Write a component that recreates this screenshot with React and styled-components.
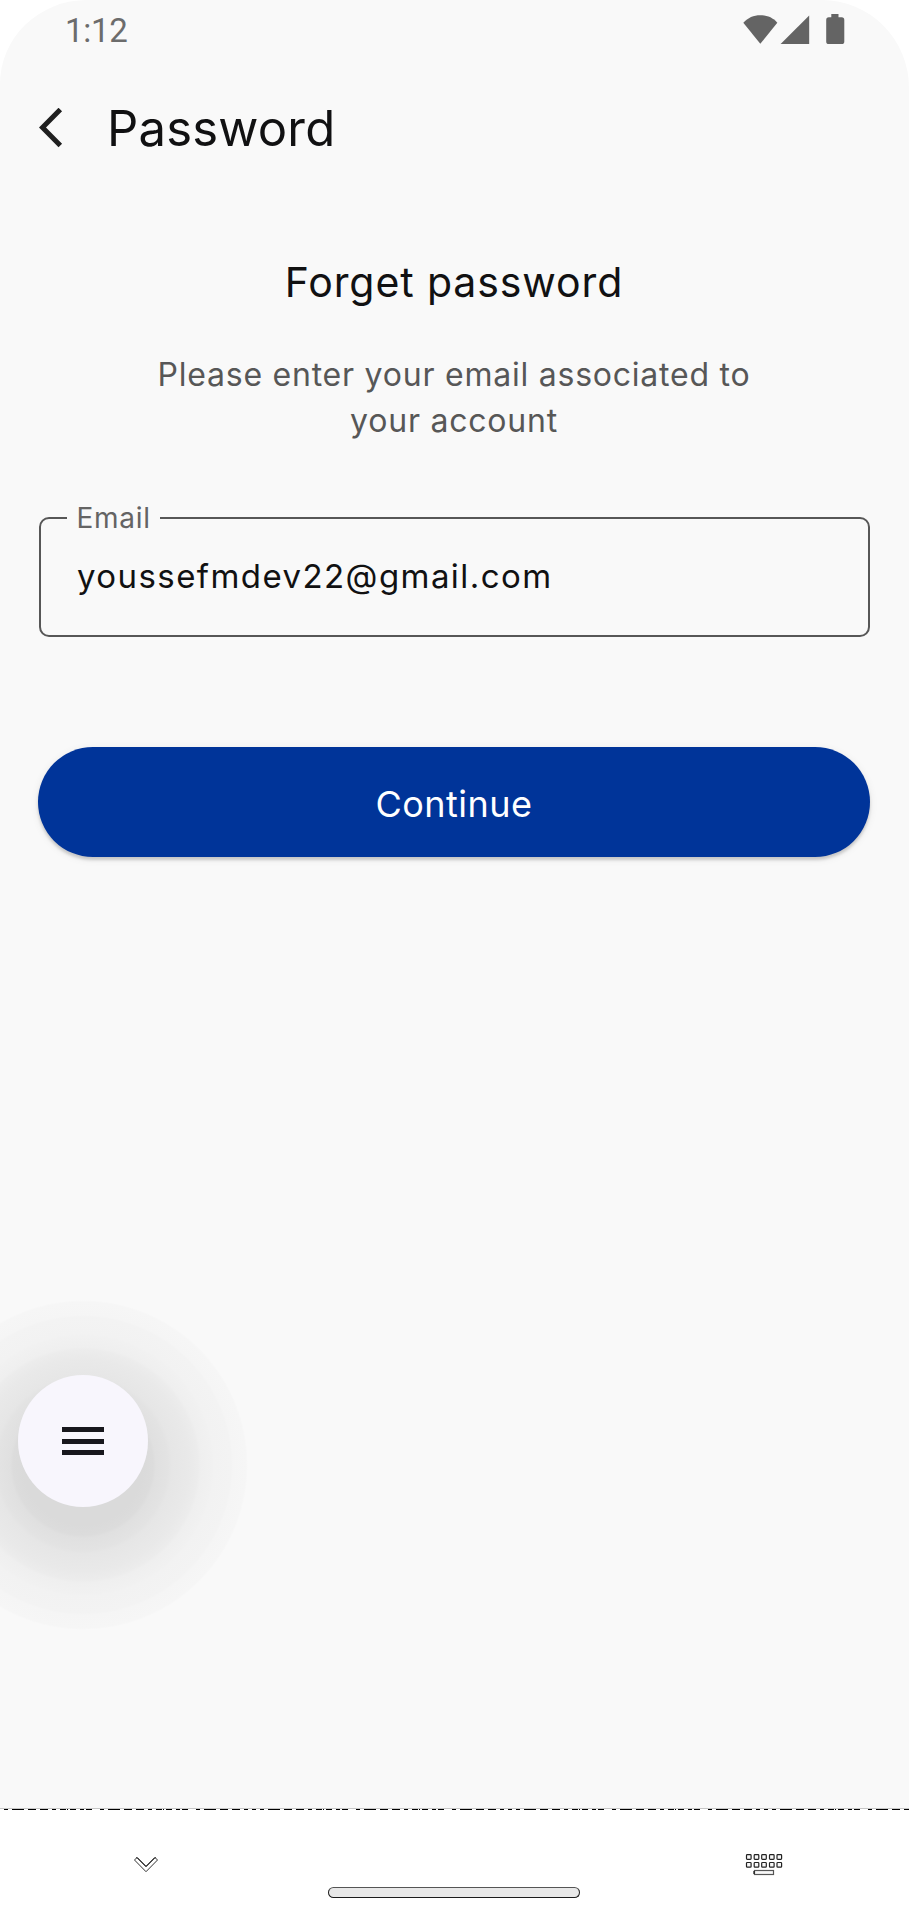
import React from "react";
import styled, { createGlobalStyle } from "styled-components";

const GlobalStyle = createGlobalStyle`
  *, *::before, *::after { box-sizing: border-box; }
  body { margin: 0; background: #fff; }
  button, input { font: inherit; }
`;

const Phone = styled.div`
  display: flex;
  flex-direction: column;
  width: 909px;
  height: 1920px;
  overflow: hidden;
  background: #fff;
  color: #111112;
  font-family: Inter, "Liberation Sans", sans-serif;
`;

const Screen = styled.main`
  position: relative;
  display: flex;
  flex-direction: column;
  height: 1808px;
  overflow: hidden;
  background: #f9f9f9;
  border-radius: 87px 87px 0 0 / 84px 88px 0 0;
`;

const StatusBar = styled.div`
  display: flex;
  align-items: center;
  justify-content: space-between;
  height: 61px;
  padding: 0 64px 0 65px;
`;

const Clock = styled.time`
  color: #6c6c6c;
  font: 400 33px/40px Roboto, sans-serif;
  letter-spacing: -0.3px;
`;

const StatusIcons = styled.svg`
  display: block;
  width: 102px;
  height: 30px;
  margin-top: -3px;
  fill: #646464;
`;

const Header = styled.header`
  display: flex;
  align-items: center;
  gap: 44px;
  height: 134px;
  padding-left: 39px;
`;

const BackButton = styled.button`
  display: flex;
  padding: 0;
  border: 0;
  background: none;
`;

const PageTitle = styled.h1`
  margin: 2px 0 0;
  font-size: 49px;
  font-weight: 400;
  line-height: 60px;
  letter-spacing: 0.2px;
`;

const Form = styled.form`
  display: flex;
  flex-direction: column;
  padding: 62px 39px 0 38px;
`;

const Heading = styled.h2`
  margin: 0;
  font-size: 41px;
  font-weight: 400;
  line-height: 50px;
  letter-spacing: 0.9px;
  text-align: center;
`;

const Hint = styled.p`
  width: 640px;
  margin: 45px auto 0;
  color: #575757;
  font-size: 32px;
  line-height: 46px;
  letter-spacing: 0.77px;
  text-align: center;
`;

const Field = styled.div`
  position: relative;
  height: 120px;
  margin: 73px 0 0 1px;
  border: 2px solid #575757;
  border-radius: 10px;
`;

const FieldLabel = styled.label`
  position: absolute;
  top: -19px;
  left: 26px;
  padding: 0 9px 0 9.5px;
  background: #f9f9f9;
  color: #646464;
  font-size: 28px;
  line-height: 36px;
  letter-spacing: 0.7px;
`;

const FieldInput = styled.input`
  display: block;
  width: 100%;
  height: 114px;
  padding: 0 36px;
  border: 0;
  outline: 0;
  background: transparent;
  color: #111112;
  font-size: 33px;
  letter-spacing: 1.43px;
`;

const SubmitButton = styled.button`
  height: 110px;
  margin-top: 110px;
  padding: 4px 0 0;
  border: 0;
  border-radius: 55px;
  background: #003499;
  color: #fff;
  font-size: 36px;
  letter-spacing: 0.5px;
  box-shadow: 0 3px 3px rgba(0, 0, 0, 0.16), 0 2px 8px rgba(0, 0, 0, 0.08);
`;

const FloatingMenu = styled.div`
  position: absolute;
  top: 1375px;
  left: 18px;
  width: 130px;
  height: 132px;

  &::before {
    content: "";
    position: absolute;
    top: -75px;
    left: -100px;
    width: 330px;
    height: 330px;
    border-radius: 50%;
    background: radial-gradient(
      circle closest-side,
      #dadada 60px,
      #dcdcdc 70px,
      #e0e0e0 73px,
      #e3e3e3 85px,
      #e6e6e6 89px,
      #e9e9e9 106px,
      #ececec 115px,
      #efefef 118px,
      #f1f1f1 129px,
      #f2f2f2 131px,
      #f3f3f3 148px,
      #f5f5f5 150px,
      #f6f6f6 163px,
      #f9f9f9 165px
    );
  }
`;

const MenuButton = styled.button`
  position: relative;
  display: flex;
  flex-direction: column;
  align-items: center;
  justify-content: center;
  gap: 6.5px;
  width: 100%;
  height: 100%;
  padding: 0;
  border: 0;
  border-radius: 50%;
  background: #f8f6fd;
`;

const MenuBar = styled.span`
  width: 42px;
  height: 5px;
  background: #18171d;
`;

const NavBar = styled.footer`
  display: flex;
  flex-direction: column;
  height: 112px;
  border-top: 1px solid #c6c6c6;
`;

const DashLine = styled.svg`
  display: block;
  width: 909px;
  height: 1px;
  shape-rendering: crispEdges;
`;

const NavKeys = styled.div`
  display: grid;
  grid-template-columns: 328px 252px 1fr;
  align-items: start;
  height: 110px;
`;

const HideIcon = styled.svg`
  width: 26px;
  height: 18px;
  margin: 46px 0 0 133px;
`;

const KeyboardIcon = styled.svg`
  width: 38px;
  height: 24px;
  margin: 43px 0 0 165px;
`;

const HomePill = styled.div`
  height: 11px;
  margin-top: 77px;
  border: 1px solid #1c1c1c;
  border-top-color: #555;
  border-radius: 5.5px;
  background: #e8e8e8;
`;

// Dashes of the divider: a short block followed by two long ones, every 256px.
const SHORT = [[0, 12], [16, 8], [28, 8], [40, 4], [48, 4], [56, 4]];
const LONG = [[0, 12], [16, 8], [28, 8], [40, 4], [48, 6], [55, 1], [58, 6], [68, 4], [74, 6], [88, 4]];
const BLOCKS = [[-52, SHORT], [12, LONG], [108, LONG]];
const dashes = [0, 256, 512, 768].flatMap((offset) =>
  BLOCKS.flatMap(([start, block]) => block.map(([x, w]) => [offset + start + x, w]))
);

const KEY_COLUMNS = [1.5, 9.2, 16.7, 24.5, 32];

export default function App() {
  return (
    <Phone>
      <GlobalStyle />
      <Screen>
        <StatusBar>
          <Clock>1:12</Clock>
          <StatusIcons viewBox="0 0 102 30">
            <path d="M0.3 8.8C5 3.7 10.5 1.3 17.3 1.3S30 3.7 34.3 8.8L17.3 29.8Z" />
            <path d="M37.6 30L66.2 1.4V30Z" />
            <path d="M88.3 0h7.2v3.3h3.2a2.6 2.6 0 0 1 2.6 2.6v21.5a2.6 2.6 0 0 1-2.6 2.6H85.800a2.6 2.6 0 0 1-2.6-2.6V5.900a2.6 2.6 0 0 1 2.6-2.6h2.500z" />
          </StatusIcons>
        </StatusBar>
        <Header>
          <BackButton type="button" aria-label="Back">
            <svg width="24" height="40" viewBox="0 0 24 40" fill="none" stroke="#202020" strokeWidth="5">
              <path d="M21.300 1.500L3.500 19.500L21.300 37.500" />
            </svg>
          </BackButton>
          <PageTitle>Password</PageTitle>
        </Header>
        <Form>
          <Heading>Forget password</Heading>
          <Hint>Please enter your email associated to your account</Hint>
          <Field>
            <FieldLabel htmlFor="email">Email</FieldLabel>
            <FieldInput id="email" type="text" defaultValue="youssefmdev22@gmail.com" spellCheck={false} />
          </Field>
          <SubmitButton type="button">Continue</SubmitButton>
        </Form>
        <FloatingMenu>
          <MenuButton type="button" aria-label="Menu">
            <MenuBar />
            <MenuBar />
            <MenuBar />
          </MenuButton>
        </FloatingMenu>
      </Screen>
      <NavBar>
        <DashLine viewBox="0 0 909 1">
          {dashes.map(([x, w]) => (
            <rect key={x} x={x} width={w} height="1" />
          ))}
        </DashLine>
        <NavKeys>
          <HideIcon viewBox="0 0 26 18" fill="#fff" stroke="#333" strokeWidth="1">
            <path d="M1.500 4L4 1.500L13 10.500L22 1.500L24.500 4L13 15.700Z" />
            <path d="M3.500 1.800L4 1.500L13 10.500L22 1.500L22.500 1.800" stroke="#000" fill="none" />
          </HideIcon>
          <HomePill />
          <KeyboardIcon viewBox="0 0 38 24" fill="#f8f8f8" stroke="#222" strokeWidth="1.200">
            {[1.7, 9.5].map((y) =>
              KEY_COLUMNS.map((x) => <rect key={`${x}-${y}`} x={x} y={y} width="4.600" height="4.700" rx="0.800" />)
            )}
            <rect x="9.500" y="17.500" width="19" height="4" stroke="#555" />
            <path d="M9 18v3" stroke="#111" />
          </KeyboardIcon>
        </NavKeys>
      </NavBar>
    </Phone>
  );
}
